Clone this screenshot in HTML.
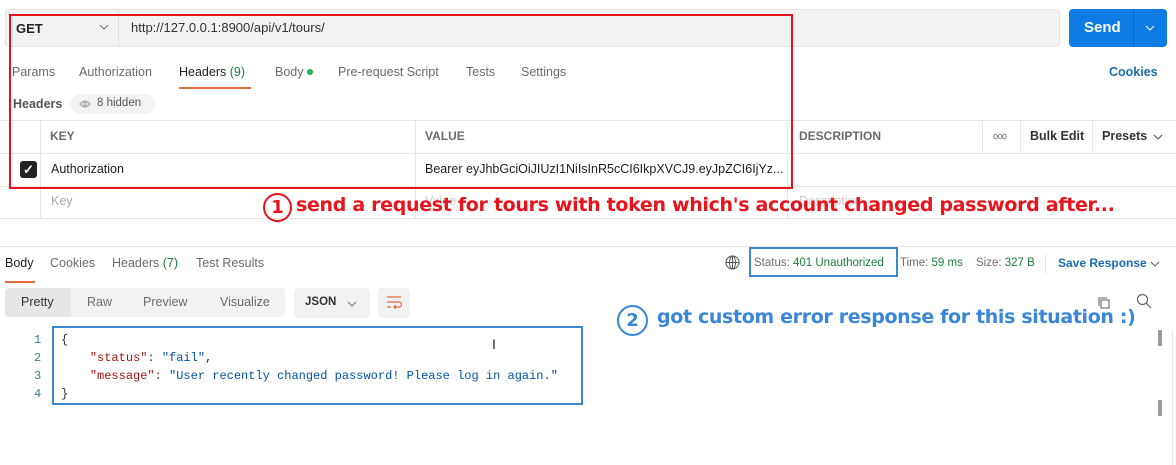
<!DOCTYPE html>
<html><head><meta charset="utf-8"><style>
*{margin:0;padding:0;box-sizing:border-box}
body{width:1176px;height:465px;background:#fff;position:relative;overflow:hidden;font-family:"Liberation Sans",sans-serif;font-size:12.5px;color:#212121}
.a{position:absolute;white-space:nowrap}
.g{color:#6b6b6b}
.ln{position:absolute;background:#e6e6e6}
.mono{font-family:"Liberation Mono","DejaVu Sans Mono",monospace;font-size:12px}
</style></head><body>
<div class="a" style="left:5px;top:9px;width:1055px;height:38px;background:#f2f2f2;border:1px solid #e4e4e4;border-radius:4px"></div>
<div class="a" style="left:118px;top:10px;width:1px;height:36px;background:#e0e0e0"></div>
<div class="a" style="left:16px;top:21px;font-weight:bold;font-size:13px">GET</div>
<svg class="a" style="left:99px;top:24px" width="10" height="6" fill="none" stroke="#777" stroke-width="1.1"><path d="M1 1l4 4 4-4"/></svg>
<div class="a" style="left:131px;top:20px;font-size:13px;color:#333">http://127.0.0.1:8900/api/v1/tours/</div>
<div class="a" style="left:1069px;top:9px;width:98px;height:38px;background:#0c7be3;border-radius:4px"></div>
<div class="a" style="left:1133px;top:9px;width:1px;height:38px;background:#0a65bb"></div>
<div class="a" style="left:1084px;top:19px;color:#fff;font-weight:bold;font-size:15px">Send</div>
<svg class="a" style="left:1145px;top:25px" width="10" height="6" fill="none" stroke="#fff" stroke-width="1.1"><path d="M1 1l4 4 4-4"/></svg>
<div class="a g" style="left:12px;top:65px">Params</div>
<div class="a g" style="left:79px;top:65px">Authorization</div>
<div class="a" style="left:179px;top:65px;color:#212121">Headers <span style="color:#1c7d3e">(9)</span></div>
<div class="a" style="left:179px;top:87px;width:72px;height:2px;background:#e26a3f"></div>
<div class="a g" style="left:275px;top:65px">Body <span style="display:inline-block;width:6px;height:6px;border-radius:3px;background:#26b15b;vertical-align:1px"></span></div>
<div class="a g" style="left:338px;top:65px">Pre-request Script</div>
<div class="a g" style="left:466px;top:65px">Tests</div>
<div class="a g" style="left:521px;top:65px">Settings</div>
<div class="a" style="left:1109px;top:65px;color:#1d6bb0;font-weight:bold">Cookies</div>
<div class="a g" style="left:13px;top:97px;font-weight:bold;color:#555">Headers</div>
<div class="a" style="left:70px;top:94px;width:85px;height:20px;background:#f3f3f3;border-radius:10px"></div>
<svg class="a" style="left:79px;top:99px" width="12" height="10" fill="none" stroke="#999" stroke-width="1"><path d="M1 5q5-6 10 0q-5 6-10 0z"/><circle cx="6" cy="5" r="1.6"/></svg>
<div class="a g" style="left:97px;top:97px;font-size:11.5px;color:#555">8 hidden</div>
<div class="ln" style="left:0;top:120px;width:1176px;height:1px"></div>
<div class="ln" style="left:0;top:153px;width:1176px;height:1px"></div>
<div class="ln" style="left:0;top:186px;width:1176px;height:1px"></div>
<div class="ln" style="left:0;top:218px;width:1176px;height:1px"></div>
<div class="ln" style="left:40px;top:120px;width:1px;height:98px"></div>
<div class="ln" style="left:415px;top:120px;width:1px;height:98px"></div>
<div class="ln" style="left:787px;top:120px;width:1px;height:98px"></div>
<div class="ln" style="left:982px;top:120px;width:1px;height:33px"></div>
<div class="ln" style="left:1020px;top:120px;width:1px;height:33px"></div>
<div class="ln" style="left:1092px;top:120px;width:1px;height:33px"></div>
<div class="a g" style="left:50px;top:129px;font-weight:bold;font-size:12px">KEY</div>
<div class="a g" style="left:425px;top:129px;font-weight:bold;font-size:12px">VALUE</div>
<div class="a g" style="left:799px;top:129px;font-weight:bold;font-size:12px">DESCRIPTION</div>
<div class="a g" style="left:993px;top:131px;font-size:9px;letter-spacing:-0.5px">ooo</div>
<div class="a" style="left:1030px;top:129px;font-weight:bold;color:#333">Bulk Edit</div>
<div class="a" style="left:1102px;top:129px;font-weight:bold;color:#333">Presets</div>
<svg class="a" style="left:1153px;top:134px" width="10" height="6" fill="none" stroke="#555" stroke-width="1.1"><path d="M1 1l4 4 4-4"/></svg>
<div class="a" style="left:20px;top:161px;width:17px;height:17px;background:#222;border-radius:3px;color:#fff;font-size:13px;text-align:center;line-height:17px;font-weight:bold">&#10003;</div>
<div class="a" style="left:51px;top:162px">Authorization</div>
<div class="a" style="left:425px;top:162px">Bearer eyJhbGciOiJIUzI1NiIsInR5cCI6IkpXVCJ9.eyJpZCI6IjYz...</div>
<div class="a" style="left:51px;top:194px;color:#aaa">Key</div>
<div class="a" style="left:425px;top:194px;color:#ccc">Value</div>
<div class="a" style="left:799px;top:194px;color:#ccc">Description</div>
<div class="a" style="left:9px;top:14px;width:784px;height:175px;border:2px solid #e8141c"></div>
<div class="a" style="left:263px;top:193px;width:29px;height:29px;border:2px solid #e8141c;border-radius:50%;color:#e8141c;font:bold 18px 'DejaVu Sans',sans-serif;text-align:center;line-height:25px">1</div>
<div class="a" style="left:296px;top:194px;color:#e8141c;font:bold 19px 'DejaVu Sans',sans-serif;letter-spacing:-0.32px">send a request for tours with token which's account changed password after...</div>
<div class="ln" style="left:0;top:246px;width:1176px;height:1px"></div>
<div class="a" style="left:5px;top:256px">Body</div>
<div class="a" style="left:5px;top:281px;width:30px;height:2px;background:#e26a3f"></div>
<div class="a g" style="left:50px;top:256px">Cookies</div>
<div class="a g" style="left:112px;top:256px">Headers <span style="color:#1c7d3e">(7)</span></div>
<div class="a g" style="left:196px;top:256px">Test Results</div>
<svg class="a" style="left:725px;top:255px" width="15" height="15" fill="none" stroke="#555" stroke-width="1"><circle cx="7.5" cy="7.5" r="6.5"/><ellipse cx="7.5" cy="7.5" rx="3" ry="6.5"/><path d="M1 7.5h13M7.5 1v13"/></svg>
<div class="a" style="left:749px;top:247px;width:149px;height:30px;border:2px solid #3a86d8"></div>
<div class="a g" style="left:754px;top:257px;font-size:11.5px">Status: <span style="color:#1c7d3e">401 Unauthorized</span></div>
<div class="a g" style="left:900px;top:257px;font-size:11.5px">Time: <span style="color:#1c7d3e">59 ms</span></div>
<div class="a g" style="left:976px;top:257px;font-size:11.5px">Size: <span style="color:#1c7d3e">327 B</span></div>
<div class="ln" style="left:1045px;top:254px;width:1px;height:20px"></div>
<div class="a" style="left:1058px;top:256px;color:#1d6bb0;font-weight:bold;font-size:12px">Save Response</div>
<svg class="a" style="left:1150px;top:261px" width="10" height="6" fill="none" stroke="#666" stroke-width="1.1"><path d="M1 1l4 4 4-4"/></svg>
<div class="a" style="left:5px;top:288px;width:280px;height:29px;background:#f2f2f2;border-radius:4px"></div>
<div class="a" style="left:5px;top:288px;width:66px;height:29px;background:#e6e6e6;border-radius:4px 0 0 4px"></div>
<div class="a" style="left:21px;top:295px;color:#333">Pretty</div>
<div class="a g" style="left:87px;top:295px">Raw</div>
<div class="a g" style="left:143px;top:295px">Preview</div>
<div class="a g" style="left:220px;top:295px">Visualize</div>
<div class="a" style="left:294px;top:288px;width:76px;height:30px;background:#f2f2f2;border-radius:4px"></div>
<div class="a" style="left:305px;top:296px;font-weight:bold;font-size:11.5px;color:#333">JSON</div>
<svg class="a" style="left:347px;top:301px" width="10" height="6" fill="none" stroke="#777" stroke-width="1.1"><path d="M1 1l4 4 4-4"/></svg>
<div class="a" style="left:378px;top:288px;width:32px;height:30px;background:#f2f2f2;border-radius:4px"></div>
<svg class="a" style="left:386px;top:295px" width="16" height="14" viewBox="0 0 16 14" fill="none" stroke="#e26a3f" stroke-width="1.2"><path d="M1 2h14M1 7h12a2.5 2.5 0 0 1 0 5H8M10 10l-2 2 2 2M1 12h4"/></svg>
<svg class="a" style="left:1097px;top:296px" width="14" height="14" fill="none" stroke="#666" stroke-width="1.1"><rect x="4" y="4" width="8" height="8"/><path d="M2 10V2h8"/></svg>
<svg class="a" style="left:1136px;top:293px" width="16" height="16" fill="none" stroke="#666" stroke-width="1.2"><circle cx="6.5" cy="6.5" r="5"/><path d="M10 10l5 5"/></svg>
<div class="a" style="left:617px;top:305px;width:31px;height:31px;border:2px solid #3a86d8;border-radius:50%;color:#3a86d8;font:bold 18px 'DejaVu Sans',sans-serif;text-align:center;line-height:27px">2</div>
<div class="a" style="left:657px;top:306px;color:#3a86d8;font:bold 19px 'DejaVu Sans',sans-serif;letter-spacing:-0.35px">got custom error response for this situation :)</div>
<div class="a mono" style="left:34px;top:331px;color:#3a7a8a;line-height:18px">1<br>2<br>3<br>4</div>
<div class="a" style="left:52px;top:326px;width:531px;height:79px;border:2px solid #3a86d8"></div>
<div class="a mono" style="left:61px;top:331px;line-height:18px;color:#333">{<br>&nbsp;&nbsp;&nbsp;&nbsp;<span style="color:#a31515">"status"</span>: <span style="color:#0451a5">"fail"</span>,<br>&nbsp;&nbsp;&nbsp;&nbsp;<span style="color:#a31515">"message"</span>: <span style="color:#0451a5">"User recently changed password! Please log in again."</span><br>}</div>
<div class="a" style="left:492px;top:336px;font-size:14px;color:#222">I</div>
<div class="a" style="left:1158px;top:330px;width:4px;height:16px;background:#999"></div>
<div class="a" style="left:1158px;top:400px;width:4px;height:16px;background:#999"></div>
<div class="ln" style="left:1172px;top:330px;width:1px;height:135px"></div>
</body></html>
